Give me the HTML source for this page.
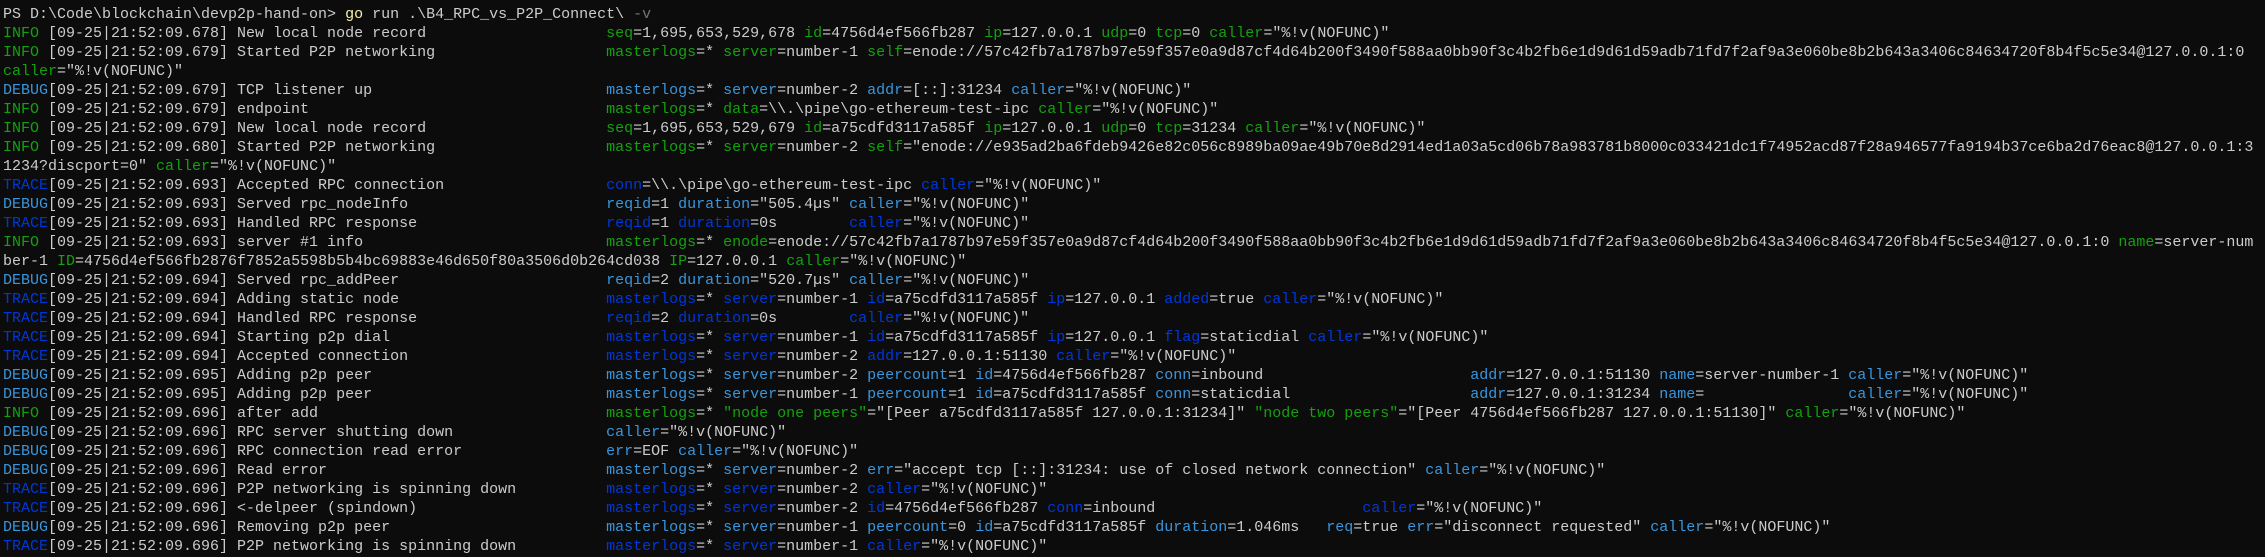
<!DOCTYPE html>
<html><head><meta charset="utf-8"><style>
html,body{margin:0;padding:0;background:#0c0c0c;width:2265px;height:557px;overflow:hidden}
pre{margin:0;padding:5px 0 0 3px;font-family:"Liberation Mono",monospace;font-size:15px;line-height:19px;color:#cccccc;white-space:pre}
.g{color:#13a10e}.b{color:#3a96dd}.t{color:#0037da}.y{color:#f9f1a5}.d{color:#767676}
.m{display:inline-block;width:41ch}
.w{display:inline-block}
</style></head><body><pre>PS D:\Code\blockchain\devp2p-hand-on&gt; <span class="y">go</span> run .\B4_RPC_vs_P2P_Connect\ <span class="d">-v</span>
<span class="g">INFO </span>[09-25|21:52:09.678] <span class="m">New local node record</span><span class="g">seq</span>=1,695,653,529,678 <span class="g">id</span>=4756d4ef566fb287 <span class="g">ip</span>=127.0.0.1 <span class="g">udp</span>=0 <span class="g">tcp</span>=0 <span class="g">caller</span>="%!v(NOFUNC)"
<span class="g">INFO </span>[09-25|21:52:09.679] <span class="m">Started P2P networking</span><span class="g">masterlogs</span>=* <span class="g">server</span>=number-1 <span class="g">self</span>=enode://57c42fb7a1787b97e59f357e0a9d87cf4d64b200f3490f588aa0bb90f3c4b2fb6e1d9d61d59adb71fd7f2af9a3e060be8b2b643a3406c84634720f8b4f5c5e34@127.0.0.1:0
<span class="g">caller</span>="%!v(NOFUNC)"
<span class="b">DEBUG</span>[09-25|21:52:09.679] <span class="m">TCP listener up</span><span class="b">masterlogs</span>=* <span class="b">server</span>=number-2 <span class="b">addr</span>=[::]:31234 <span class="b">caller</span>="%!v(NOFUNC)"
<span class="g">INFO </span>[09-25|21:52:09.679] <span class="m">endpoint</span><span class="g">masterlogs</span>=* <span class="g">data</span>=\\.\pipe\go-ethereum-test-ipc <span class="g">caller</span>="%!v(NOFUNC)"
<span class="g">INFO </span>[09-25|21:52:09.679] <span class="m">New local node record</span><span class="g">seq</span>=1,695,653,529,679 <span class="g">id</span>=a75cdfd3117a585f <span class="g">ip</span>=127.0.0.1 <span class="g">udp</span>=0 <span class="g">tcp</span>=31234 <span class="g">caller</span>="%!v(NOFUNC)"
<span class="g">INFO </span>[09-25|21:52:09.680] <span class="m">Started P2P networking</span><span class="g">masterlogs</span>=* <span class="g">server</span>=number-2 <span class="g">self</span>="enode://e935ad2ba6fdeb9426e82c056c8989ba09ae49b70e8d2914ed1a03a5cd06b78a983781b8000c033421dc1f74952acd87f28a946577fa9194b37ce6ba2d76eac8@127.0.0.1:3
1234?discport=0" <span class="g">caller</span>="%!v(NOFUNC)"
<span class="t">TRACE</span>[09-25|21:52:09.693] <span class="m">Accepted RPC connection</span><span class="t">conn</span>=\\.\pipe\go-ethereum-test-ipc <span class="t">caller</span>="%!v(NOFUNC)"
<span class="b">DEBUG</span>[09-25|21:52:09.693] <span class="m">Served rpc_nodeInfo</span><span class="b">reqid</span>=1 <span class="b">duration</span>="505.4µs" <span class="b">caller</span>="%!v(NOFUNC)"
<span class="t">TRACE</span>[09-25|21:52:09.693] <span class="m">Handled RPC response</span><span class="w" style="width:27ch"><span class="t">reqid</span>=1 <span class="t">duration</span>=0s</span><span class="t">caller</span>="%!v(NOFUNC)"
<span class="g">INFO </span>[09-25|21:52:09.693] <span class="m">server #1 info</span><span class="g">masterlogs</span>=* <span class="g">enode</span>=enode://57c42fb7a1787b97e59f357e0a9d87cf4d64b200f3490f588aa0bb90f3c4b2fb6e1d9d61d59adb71fd7f2af9a3e060be8b2b643a3406c84634720f8b4f5c5e34@127.0.0.1:0 <span class="g">name</span>=server-num
ber-1 <span class="g">ID</span>=4756d4ef566fb2876f7852a5598b5b4bc69883e46d650f80a3506d0b264cd038 <span class="g">IP</span>=127.0.0.1 <span class="g">caller</span>="%!v(NOFUNC)"
<span class="b">DEBUG</span>[09-25|21:52:09.694] <span class="m">Served rpc_addPeer</span><span class="b">reqid</span>=2 <span class="b">duration</span>="520.7µs" <span class="b">caller</span>="%!v(NOFUNC)"
<span class="t">TRACE</span>[09-25|21:52:09.694] <span class="m">Adding static node</span><span class="t">masterlogs</span>=* <span class="t">server</span>=number-1 <span class="t">id</span>=a75cdfd3117a585f <span class="t">ip</span>=127.0.0.1 <span class="t">added</span>=true <span class="t">caller</span>="%!v(NOFUNC)"
<span class="t">TRACE</span>[09-25|21:52:09.694] <span class="m">Handled RPC response</span><span class="w" style="width:27ch"><span class="t">reqid</span>=2 <span class="t">duration</span>=0s</span><span class="t">caller</span>="%!v(NOFUNC)"
<span class="t">TRACE</span>[09-25|21:52:09.694] <span class="m">Starting p2p dial</span><span class="t">masterlogs</span>=* <span class="t">server</span>=number-1 <span class="t">id</span>=a75cdfd3117a585f <span class="t">ip</span>=127.0.0.1 <span class="t">flag</span>=staticdial <span class="t">caller</span>="%!v(NOFUNC)"
<span class="t">TRACE</span>[09-25|21:52:09.694] <span class="m">Accepted connection</span><span class="t">masterlogs</span>=* <span class="t">server</span>=number-2 <span class="t">addr</span>=127.0.0.1:51130 <span class="t">caller</span>="%!v(NOFUNC)"
<span class="b">DEBUG</span>[09-25|21:52:09.695] <span class="m">Adding p2p peer</span><span class="w" style="width:96ch"><span class="b">masterlogs</span>=* <span class="b">server</span>=number-2 <span class="b">peercount</span>=1 <span class="b">id</span>=4756d4ef566fb287 <span class="b">conn</span>=inbound</span><span class="w" style="width:21ch"><span class="b">addr</span>=127.0.0.1:51130</span><span class="w" style="width:21ch"><span class="b">name</span>=server-number-1</span><span class="b">caller</span>="%!v(NOFUNC)"
<span class="b">DEBUG</span>[09-25|21:52:09.695] <span class="m">Adding p2p peer</span><span class="w" style="width:96ch"><span class="b">masterlogs</span>=* <span class="b">server</span>=number-1 <span class="b">peercount</span>=1 <span class="b">id</span>=a75cdfd3117a585f <span class="b">conn</span>=staticdial</span><span class="w" style="width:21ch"><span class="b">addr</span>=127.0.0.1:31234</span><span class="w" style="width:21ch"><span class="b">name</span>=</span><span class="b">caller</span>="%!v(NOFUNC)"
<span class="g">INFO </span>[09-25|21:52:09.696] <span class="m">after add</span><span class="g">masterlogs</span>=* <span class="g">"node one peers"</span>="[Peer a75cdfd3117a585f 127.0.0.1:31234]" <span class="g">"node two peers"</span>="[Peer 4756d4ef566fb287 127.0.0.1:51130]" <span class="g">caller</span>="%!v(NOFUNC)"
<span class="b">DEBUG</span>[09-25|21:52:09.696] <span class="m">RPC server shutting down</span><span class="b">caller</span>="%!v(NOFUNC)"
<span class="b">DEBUG</span>[09-25|21:52:09.696] <span class="m">RPC connection read error</span><span class="b">err</span>=EOF <span class="b">caller</span>="%!v(NOFUNC)"
<span class="b">DEBUG</span>[09-25|21:52:09.696] <span class="m">Read error</span><span class="b">masterlogs</span>=* <span class="b">server</span>=number-2 <span class="b">err</span>="accept tcp [::]:31234: use of closed network connection" <span class="b">caller</span>="%!v(NOFUNC)"
<span class="t">TRACE</span>[09-25|21:52:09.696] <span class="m">P2P networking is spinning down</span><span class="t">masterlogs</span>=* <span class="t">server</span>=number-2 <span class="t">caller</span>="%!v(NOFUNC)"
<span class="t">TRACE</span>[09-25|21:52:09.696] <span class="m">&lt;-delpeer (spindown)</span><span class="w" style="width:84ch"><span class="t">masterlogs</span>=* <span class="t">server</span>=number-2 <span class="t">id</span>=4756d4ef566fb287 <span class="t">conn</span>=inbound</span><span class="t">caller</span>="%!v(NOFUNC)"
<span class="b">DEBUG</span>[09-25|21:52:09.696] <span class="m">Removing p2p peer</span><span class="w" style="width:80ch"><span class="b">masterlogs</span>=* <span class="b">server</span>=number-1 <span class="b">peercount</span>=0 <span class="b">id</span>=a75cdfd3117a585f <span class="b">duration</span>=1.046ms</span><span class="b">req</span>=true <span class="b">err</span>="disconnect requested" <span class="b">caller</span>="%!v(NOFUNC)"
<span class="t">TRACE</span>[09-25|21:52:09.696] <span class="m">P2P networking is spinning down</span><span class="t">masterlogs</span>=* <span class="t">server</span>=number-1 <span class="t">caller</span>="%!v(NOFUNC)"</pre></body></html>
